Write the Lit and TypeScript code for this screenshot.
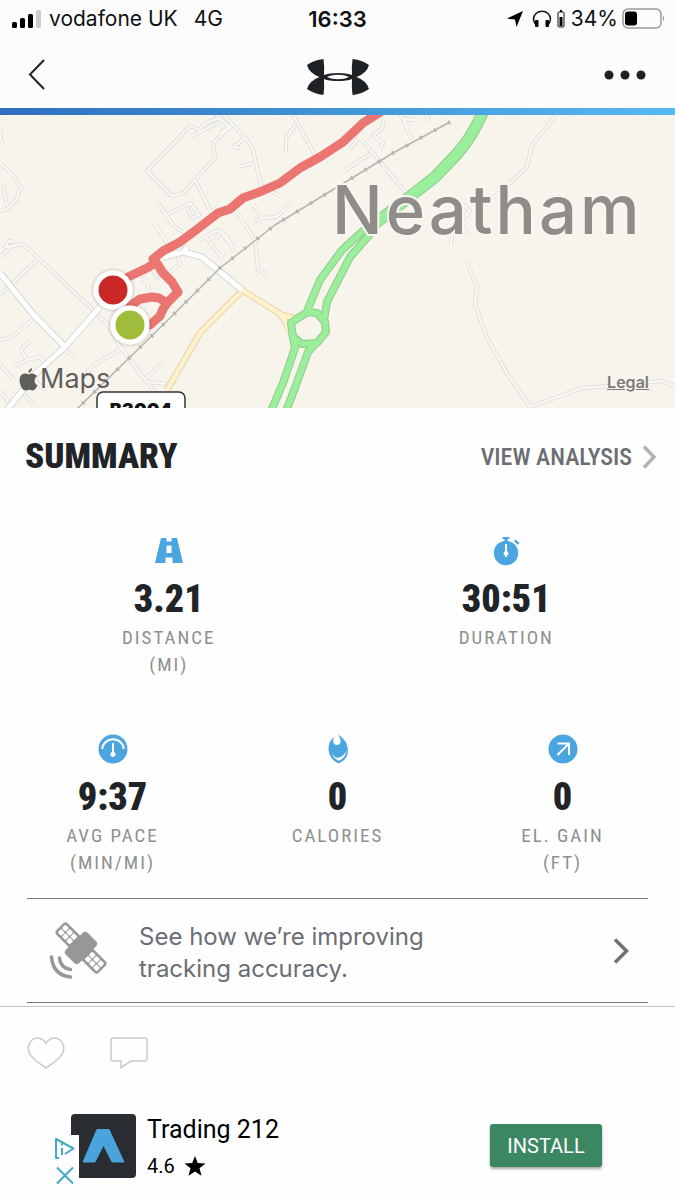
import { LitElement, html, svg, css } from "lit";
import { customElement, property } from "lit/decorators.js";

const lanes = [
  // north-west estate
  "M0 163 L14 176 L20 187 L23 191 M19 191 L17 199 L7 209 L0 211 M3 184 L7 206 M0 130 L2 144",
  "M0 257 L12 246 L22 244 L33 253 L92 309 L108 325 L119 345 L146 381 L163 402",
  "M12 246 L5 247 L9 241 L13 242 M36 261 L0 295 M32 320 L12 337 L0 340 M30 341 L21 350 L27 360 L15 366 M27 360 L40 357 L46 365 M64 349 L75 358 M123 348 L92 366 L84 378 M0 364 L14 381 M0 391 L13 408 M146 378 L162 363 M148 382 L170 384 M32 378 L45 390 M22 392 L33 404",
  // housing blocks above the route
  "M172 196 L147 171 L190 126 L199 130 L205 123 L220 118 M172 196 L184 193 L195 180 L215 158 L213 143 L230 127 L214 113 M192 136 L222 121 M195 180 L211 212 M211 212 L218 207",
  "M158 203 L174 226 L183 232 M165 216 L190 203 L199 215 L192 218 L187 208 M154 223 L170 248 M240 148 L232 147 M200 240 L218 230 L227 236 L231 247 M206 237 L222 258 M216 239 L222 230 M238 168 L240 168 M177 255 L180 264 L166 275 M152 268 L158 280 M141 280 L146 278 M150 291 L147 283",
  "M222 113 L247 140 L253 150 L261 186 L280 196 M234 146 L246 138 M238 167 L254 163 M220 133 L232 125 M293 115 L316 157 M295 125 L286 138 L286 152 M253 204 L262 218 L276 217 L290 205 M262 218 L254 222 M237 212 L255 240 L258 270 L267 274 M220 230 L225 238 L232 245 L234 252 M220 259 L223 254",
  "M356 133 L407 194 M370 154 L344 171 M361 136 L350 149 M384 119 L382 129 L373 135 L383 143 L380 149 M400 113 L412 140 M410 128 L403 119 L418 120 M425 113 L429 121",
  // eastern footpaths
  "M556 115 L532 145 L527 167 L507 186 L475 212 M454 206 L464 205 L470 211 L460 222 L468 234 M452 236 L451 246",
  "M467 262 L477 287 L475 304 L487 338 L508 375 L530 407 L582 388 L610 386 M640 383 L661 381 L675 386",
];

const mainRoads = "M0 273 L32 313 L65 347 M100 307 L65 347 L37 372 L7 410 M163 257 L183 252 L202 257 L242 290 M183 252 L187 247";
const yellowRoads = "M240 293 L200 333 L167 390 M242 290 L282 315 L294 318 M280 314 L285 321 L290 332";
const greenRoads = [
  "M307 311 L320 280 L342 250 L363 231 L380 218",
  "M324 320 L327 302 L350 257 L371 233 L382 218",
  "M298 318 L308 312 L317 313 L325 322 L326 332 L317 343 L302 344 L293 337 L291 323 Z",
  "M292 332 L295 348 L283 383 L271 411",
  "M315 344 L308 352 L295 388 L286 411",
];
const trunk = "M483 112 Q472 137 457 154 L435 177 L407 199 L374 224";
const railway = "M450 122 L393 153 L275 225 L220 268 L170 318 L77 409";
const route = [
  "M382 111 L363 123 L343 142 L320 157 L300 168 L280 183 L262 191 L243 198 L230 209 L218 213 L200 227 L180 242 L163 251 L153 259 L155 263 L147 268 L128 277",
  "M156 262 L163 273 L172 282 L178 292 L167 303 L159 298 L152 297 L140 299 L130 306",
  "M167 303 L163 309 L160 316 L150 325",
];

@customElement("status-bar")
export class StatusBar extends LitElement {
  static styles = css`
    :host {
      display: grid;
      grid-template-columns: 1fr auto 1fr;
      align-items: center;
      height: 38px;
      padding: 0 10px;
      color: #111;
      font: 400 21px/24px Inter, sans-serif;
    }
    .side { display: flex; align-items: center; white-space: nowrap; }
    .signal { margin-right: 8px; }
    .network { margin-left: 16px; }
    .clock { font-size: 22px; font-weight: 600; }
    .right { justify-content: flex-end; }
    .phones { margin: 0 5px 0 8px; }
    .level { margin-right: 6px; }
    .battery { margin-left: 4px; }
  `;
  render() {
    return html`
      <div class="side">
        <svg class="signal" width="31" height="20" viewBox="0 0 31 20" aria-hidden="true">
          <rect x="2" y="13" width="5" height="6" rx="1.5" />
          <rect x="10" y="9" width="5" height="10" rx="1.5" />
          <rect x="18" y="5" width="5" height="14" rx="1.5" />
          <rect x="26" y="1" width="5" height="18" rx="1.5" fill="#ccc" />
        </svg>
        <span>vodafone UK</span><span class="network">4G</span>
      </div>
      <time class="clock">16:33</time>
      <div class="side right">
        <svg width="18" height="18" viewBox="0 0 18 18" aria-hidden="true"><path d="M17 1 L10.5 17 L9 9.5 L1 8.5 Z" /></svg>
        <svg class="phones" width="20" height="18" viewBox="0 0 20 18" aria-hidden="true">
          <path d="M4 15 Q1.5 12 1.5 9 A8.5 7.8 0 0 1 18.500 9 Q18.500 12 16 15" fill="none" stroke="#111" stroke-width="1.500" />
          <rect x="3" y="10" width="3.500" height="7" rx="1" /><rect x="13.500" y="10" width="3.500" height="7" rx="1" />
        </svg>
        <svg class="level" width="8" height="18" viewBox="0 0 8 18" aria-hidden="true">
          <rect x="1" y="2" width="6" height="15" rx="1" fill="none" stroke="#111" /><rect x="2.500" y="7" width="3" height="9" /><rect x="3" y="0" width="2" height="2" />
        </svg>
        <span>34%</span>
        <svg class="battery" width="43" height="22" viewBox="0 0 43 22" aria-hidden="true">
          <rect x="1" y="1" width="38" height="19" rx="5" fill="none" stroke="#999" stroke-width="1.500" />
          <rect x="3" y="3.500" width="12" height="14" rx="3" /><path d="M41 7.500 Q43.500 10.500 41 13.500 Z" fill="#999" />
        </svg>
      </div>`;
  }
}

@customElement("nav-bar")
export class NavBar extends LitElement {
  static styles = css`
    :host {
      display: flex;
      justify-content: space-between;
      align-items: center;
      box-sizing: border-box;
      height: 70px;
      padding: 4px 22px 0 20px;
    }
    button { display: flex; justify-content: center; padding: 0; border: 0; background: none; color: #1f2225; }
    .back { width: 34px; }
    .more { width: 56px; }
    .logo { margin-left: 24px; }
  `;
  render() {
    return html`
      <button class="back" aria-label="Back">
        <svg width="18" height="32" viewBox="0 0 18 32" fill="none" stroke="currentColor" stroke-width="2"><path d="M16 1 L2 15.500 L16 30" /></svg>
      </button>
      <svg class="logo" width="64" height="42" viewBox="0 -4 64 42" role="img" aria-label="Under Armour">
        <path fill="#1f2225" fill-rule="evenodd" d="M17.500 1 Q18.500 8 18 17 C24 14.200 40 14.200 46 17 Q45.500 8 46.500 1 Q56 2 63 7 Q61 15 50.500 19 Q61 23 63 31 Q56 36 46.500 37 Q45.500 30 46 21 C40 23.800 24 23.800 18 21 Q18.500 30 17.500 37 Q8 36 1 31 Q3 23 13.500 19 Q3 15 1 7 Q8 2 17.500 1 Z M21 19 C27 22 37 22 43 19 C37 16 27 16 21 19 Z" />
      </svg>
      <button class="more" aria-label="More options">
        <svg width="44" height="10" viewBox="0 0 44 10" fill="currentColor"><circle cx="6" cy="5" r="4.500" /><circle cx="22" cy="5" r="4.500" /><circle cx="38" cy="5" r="4.500" /></svg>
      </button>`;
  }
}

@customElement("route-map")
export class RouteMap extends LitElement {
  static styles = css`
    :host { display: block; position: relative; overflow: hidden; background: #f7f4ec; }
    .canvas { display: block; width: 100%; height: auto; }
    .place { font: 500 67px Inter, sans-serif; letter-spacing: 3px; fill: #8f8c89; stroke: #f9f7f2; stroke-width: 4px; paint-order: stroke; }
    .shield { font: 900 18px Inter, sans-serif; fill: #111; }
    .brand {
      position: absolute; left: 19px; bottom: 14px;
      display: flex; align-items: center; gap: 2px;
      color: #5f5e5c; font: 400 27px/30px Inter, sans-serif;
    }
    .legal {
      position: absolute; right: 26px; bottom: 16px;
      color: #7d7b78; font: 600 16px/20px Inter, sans-serif;
    }
  `;
  private dots(cx: number, cy: number, color: string) {
    return svg`<circle cx=${cx} cy=${cy} r="22" fill="#000" opacity=".07" />
      <circle cx=${cx} cy=${cy} r="19.500" fill="#fff" /><circle cx=${cx} cy=${cy} r="14.500" fill=${color} />`;
  }
  render() {
    return html`
      <svg class="canvas" viewBox="0 115 675 293" role="img" aria-label="Map of the run near Neatham" fill="none" stroke-linejoin="round">
        ${lanes.map((d) => svg`<path d=${d} stroke="#dddcdd" stroke-width="4" />`)}
        ${lanes.map((d) => svg`<path d=${d} stroke="#f9f7f2" stroke-width="2.400" />`)}
        <path d=${mainRoads} stroke="#d9d8d8" stroke-width="7" /><path d=${mainRoads} stroke="#fff" stroke-width="5" />
        <path d=${railway} stroke="#b5b4b1" stroke-width="1.500" /><path d=${railway} stroke="#b5b4b1" stroke-width="4" stroke-dasharray="2 14" />
        <path d=${yellowRoads} stroke="#ecd0a0" stroke-width="6.500" /><path d=${yellowRoads} stroke="#fdf2cf" stroke-width="4.500" />
        ${greenRoads.map((d) => svg`<path d=${d} stroke="#8fcb8b" stroke-width="8" />`)}
        <path d=${trunk} stroke="#8fcb8b" stroke-width="12" />
        ${greenRoads.map((d) => svg`<path d=${d} stroke="#9bee9b" stroke-width="6" />`)}
        <path d=${trunk} stroke="#9bee9b" stroke-width="10" />
        <g stroke="#eb7671" stroke-width="9" stroke-linecap="round">${route.map((d) => svg`<path d=${d} />`)}</g>
        <text class="place" x="332" y="234">Neatham</text>
        ${this.dots(113, 290, "#ca2727")} ${this.dots(130, 325, "#9fbd3a")}
        <rect x="97" y="392" width="88" height="34" rx="6" fill="#fff" stroke="#333" stroke-width="1.500" />
        <text class="shield" x="141" y="416" text-anchor="middle">B3004</text>
      </svg>
      <div class="brand">
        <svg width="19" height="24" viewBox="0 0 19 24" fill="currentColor" aria-hidden="true">
          <path d="M13 1 Q13 5 9.500 6 Q9 2.500 13 1 Z M9.500 7.500 Q11 6.500 13.500 6.500 Q16 6.500 18 9 Q15.500 10.500 15.500 13.500 Q15.500 17 18.500 18.200 Q16 23.500 13.500 23.500 Q11.500 22.800 9.800 22.800 Q8 23.500 6.500 23.500 Q4 23.500 2 19.500 Q.5 16.500.5 13 Q.8 6.500 6 6.500 Q8 6.700 9.500 7.500 Z" />
        </svg><span>Maps</span>
      </div>
      <a class="legal" href="#legal">Legal</a>`;
  }
}

const glyphs: Record<string, unknown> = {
  road: svg`<path fill-rule="evenodd" d="M7 2 H12.500 V5.500 H17.500 V2 H23 L29 27 H18.500 V21.500 H11.500 V27 H1 Z M12.500 9.500 H17.500 V17 H12.500 Z" />`,
  watch: svg`<circle cx="15" cy="17" r="12.200" /><path d="M11.500 1 H18.500 V3 H16.500 V6 H13.500 V3 H11.500 Z M24.500 3.500 L28.500 7 L27 8.800 L23 5.500 Z" />
    <path d="M14 8 H16 V15 Q17.500 16 17.500 17.500 Q17.500 18.800 16 19.500 V21 H14 V19.500 Q12.500 18.800 12.500 17.500 Q12.500 16 14 15 Z" fill="#fff" />`,
  gauge: svg`<circle cx="15" cy="15" r="14.500" /><path d="M4.300 15 A10.700 9.700 0 0 1 25.700 15" fill="none" stroke="#fff" stroke-width="2" />
    <path d="M14 9 H16 V18 A2.600 2.600 0 1 1 14 18 Z" fill="#fff" />`,
  flame: svg`<path d="M14.500 .5 Q18 4 17.500 8 Q17 11 14.200 11 Q10.800 10.800 10.300 8 Q9.900 5.500 10.800 3 Q5.500 8 5.500 15 Q5.500 20 8.500 24 Q11.500 28 15.500 29.500 Q22.500 26.500 24.500 20.500 Q25.800 15 23.500 9.500 Q20.500 3.500 14.500 .5 Z" />
    <path d="M8.800 19 Q11 23.500 15 23.800 Q20 23 23.500 17 Q22.500 23.500 16 26.800 Q10.500 24.500 8.800 19 Z" fill="#fff" />`,
  climb: svg`<circle cx="15" cy="15" r="14.500" /><path d="M9.500 9.500 H21 V21 M21 9.500 L9.500 21" fill="none" stroke="#fff" stroke-width="2" />`,
};

@customElement("stat-tile")
export class StatTile extends LitElement {
  @property() icon = "";
  @property() value = "";
  @property() label = "";
  @property() unit = "";
  static styles = css`
    :host { display: flex; flex-direction: column; align-items: center; }
    .value { margin: 13px 0 5px; color: #202428; font: 900 38px/40px "Roboto Condensed", "Liberation Sans Narrow", Roboto, sans-serif; }
    .label { color: #8f8f8f; font: 400 19px/27px "Roboto Condensed", "Liberation Sans Narrow", Roboto, sans-serif; letter-spacing: 2px; text-align: center; }
    .label span { display: block; }
  `;
  render() {
    return html`
      <svg width="30" height="30" viewBox="0 0 30 30" fill="#4ba5e0" aria-hidden="true">${glyphs[this.icon]}</svg>
      <div class="value">${this.value}</div>
      <div class="label"><span>${this.label}</span><span>${this.unit}</span></div>`;
  }
}

@customElement("ad-banner")
export class AdBanner extends LitElement {
  static styles = css`
    :host { display: flex; align-items: flex-start; padding: 0 73px 0 53px; color: #000; font-family: Roboto, sans-serif; }
    .art { flex: none; }
    .copy { flex: 1; padding: 1px 0 0 11px; }
    .name { font-size: 25px; line-height: 32px; }
    .rating { display: flex; align-items: center; gap: 9px; margin-top: 2px; font-size: 20px; line-height: 36px; }
    .install {
      width: 112px; height: 43px; margin-top: 11px; padding: 0; border: 0; border-radius: 3px;
      background: #3b8762; color: #fff; font: 400 20px/24px Roboto, sans-serif;
      box-shadow: 0 2px 3px rgba(0, 0, 0, .35);
    }
  `;
  render() {
    return html`
      <svg class="art" width="83" height="74" viewBox="0 0 83 74" aria-hidden="true">
        <path d="M22 1 H79 Q83 1 83 5 V61 Q83 65 79 65 H26 V22 H18 V5 Q18 1 22 1 Z" fill="#292d32" />
        <path d="M44 16.500 H56 L71 49 H59 L50.500 32 L42 49 H30 Z" fill="#4aa3dc" stroke="#4aa3dc" stroke-linejoin="round" />
        <g fill="none" stroke="#45a9c5" stroke-width="2" stroke-linejoin="round">
          <path d="M6 45 H3 V26 L20.500 35.500 L12 41" /><path d="M9 35 V42 M9 30 V32.500" /><path d="M4 54.500 L20 70.500 M20 54.500 L4 70.500" />
        </g>
      </svg>
      <div class="copy">
        <div class="name">Trading 212</div>
        <div class="rating">4.6
          <svg width="22" height="20" viewBox="0 0 22 20" role="img" aria-label="stars"><path d="M11 0 L13.800 7 L21.500 7.400 L15.500 12.200 L17.500 19.700 L11 15.500 L4.500 19.700 L6.500 12.200 L.5 7.400 L8.200 7 Z" /></svg>
        </div>
      </div>
      <button class="install">INSTALL</button>`;
  }
}

@customElement("app-root")
export class AppRoot extends LitElement {
  static styles = css`
    :host { display: block; min-height: 100vh; background: #fefefe; color: #202428; }
    .stripe { height: 7px; background: linear-gradient(90deg, #2f6fbe, #56b9f2); }
    .top { background: #fcfcfd; }
    .heading { display: flex; justify-content: space-between; align-items: center; height: 98px; padding: 0 18px 0 25px; }
    h1 { margin: 0; font: 900 35px/40px "Roboto Condensed", "Liberation Sans Narrow", Roboto, sans-serif; }
    .analysis { display: flex; align-items: center; gap: 10px; color: #6c6d72; text-decoration: none; font: 500 24px/30px "Roboto Condensed", "Liberation Sans Narrow", Roboto, sans-serif; }
    .stats { display: grid; padding-top: 30px; }
    .two { grid-template-columns: repeat(2, 1fr); }
    .three { grid-template-columns: repeat(3, 1fr); padding-top: 56px; }
    .promo {
      display: flex; align-items: center; height: 103px; margin: 22px 27px 3px; padding: 0 18px 0 22px;
      border: solid #77787c; border-width: 1px 0;
      color: #6c6d75; text-decoration: none; font: 400 24px/32px Inter, sans-serif;
    }
    .promo p { flex: 1; margin: 0; padding: 4px 0 0 31px; }
    .social { display: flex; align-items: center; gap: 44px; height: 92px; padding: 0 27px; border-top: 1px solid #c4c4c6; }
    .social button { display: flex; padding: 0; border: 0; background: none; color: #c9c9cf; }
    ad-banner { padding-top: 14px; }
  `;
  render() {
    return html`
      <header class="top"><status-bar></status-bar><nav-bar></nav-bar></header>
      <div class="stripe"></div>
      <route-map></route-map>
      <main>
        <div class="heading">
          <h1>SUMMARY</h1>
          <a class="analysis" href="#analysis">VIEW ANALYSIS
            <svg width="15" height="24" viewBox="0 0 15 24" fill="none" stroke="#b4b4b6" stroke-width="3.500" aria-hidden="true"><path d="M2 1.500 L12 12 L2 22.500" /></svg>
          </a>
        </div>
        <section class="stats two">
          <stat-tile icon="road" value="3.21" label="DISTANCE" unit="(MI)"></stat-tile>
          <stat-tile icon="watch" value="30:51" label="DURATION"></stat-tile>
        </section>
        <section class="stats three">
          <stat-tile icon="gauge" value="9:37" label="AVG PACE" unit="(MIN/MI)"></stat-tile>
          <stat-tile icon="flame" value="0" label="CALORIES"></stat-tile>
          <stat-tile icon="climb" value="0" label="EL. GAIN" unit="(FT)"></stat-tile>
        </section>
        <a class="promo" href="#accuracy">
          <svg width="59" height="58" viewBox="0 0 59 58" fill="#979797" aria-hidden="true">
            <g transform="translate(32 26) rotate(45)">
              <rect x="-30" y="-8" width="60" height="16" rx="3.500" />
              <g fill="#fff">
                ${[-27.5, -21.5, -15.5, 10.5, 16.5, 22.5].map((x) => svg`<rect x=${x} y="-5.500" width="5" height="5" rx="1" /><rect x=${x} y=".5" width="5" height="5" rx="1" />`)}
              </g>
              <rect x="-9.500" y="-15.500" width="19" height="31" rx="4" />
            </g>
            <path d="M2.500 35 Q4 53 21.500 55 M10.500 36 Q11.500 46 21.500 47.500" fill="none" stroke="#979797" stroke-width="3.500" stroke-linecap="round" />
          </svg>
          <p>See how we’re improving<br />tracking accuracy.</p>
          <svg width="17" height="26" viewBox="0 0 17 26" fill="none" stroke="#707177" stroke-width="3.500" aria-hidden="true"><path d="M2 1.500 L13.500 13 L2 24.500" /></svg>
        </a>
        <div class="social">
          <button aria-label="Like">
            <svg width="38" height="32" viewBox="0 0 38 32" fill="none" stroke="currentColor" stroke-width="1.500"><path d="M19 6.500 C22 .5 29 -.5 33 3 C38.500 8 37.500 15 33 20 Q27 26 19 31 Q11 26 5 20 C.5 15 -.5 8 5 3 C9 -.5 16 .5 19 6.500 Z" /></svg>
          </button>
          <button aria-label="Comment">
            <svg width="40" height="34" viewBox="0 0 40 34" fill="none" stroke="currentColor" stroke-width="1.500"><path d="M4.500 2 H35.500 Q38 2 38 4.500 V22.500 Q38 25 35.500 25 H22 L12 31.500 V25 H4.500 Q2 25 2 22.500 V4.500 Q2 2 4.500 2 Z" /></svg>
          </button>
        </div>
        <ad-banner></ad-banner>
      </main>`;
  }
}
